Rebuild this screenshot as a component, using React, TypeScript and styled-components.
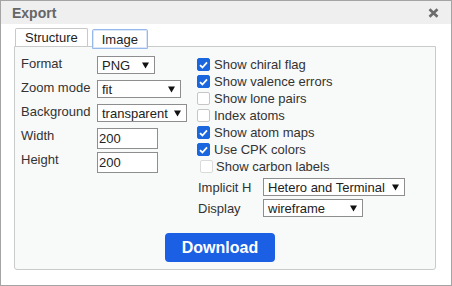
import React from 'react';
import styled, { createGlobalStyle } from 'styled-components';

const Global = createGlobalStyle`
  html, body { margin: 0; padding: 0; background: #fff; }
  body { font-family: "Liberation Sans", Arial, sans-serif; color: #333; }
  * { box-sizing: border-box; }
`;

const Dialog = styled.div`
  width: 452px;
  height: 286px;
  border: 1px solid #a4a4a4;
  background: #fff;
  display: flex;
  flex-direction: column;
`;

const Header = styled.div`
  height: 23px;
  background: #efefef;
  display: flex;
  align-items: center;
  justify-content: space-between;
  padding: 0 12px 0 11px;
`;

const Title = styled.div`
  font-weight: bold;
  font-size: 14px;
  color: #666;
`;

const Close = styled.button`
  border: 0;
  background: none;
  padding: 0;
  width: 11px;
  height: 10px;
  display: flex;
  color: #6c6c6c;
`;

const Body = styled.div`
  padding: 4px 15px 0 13px;
  display: flex;
  flex-direction: column;
`;

const TabRow = styled.div`
  display: flex;
  gap: 4px;
  height: 18px;
  padding-left: 1px;
  align-items: flex-start;
`;

const Tab = styled.div<{ $active?: boolean }>`
  position: relative;
  z-index: 1;
  font-size: 13px;
  color: #222;
  background: #fff;
  display: flex;
  align-items: center;
  justify-content: center;
  border: 1px solid ${(p) => (p.$active ? '#96b9ec' : '#c8c8c8')};
  border-bottom: ${(p) => (p.$active ? '1px solid #96b9ec' : '0')};
  border-radius: 2px 2px 0 0;
  height: ${(p) => (p.$active ? '20px' : '18px')};
  margin-top: ${(p) => (p.$active ? '1px' : '0')};
  padding: 0 9px;
  box-shadow: ${(p) => (p.$active ? 'inset 0 0 0 1px #dbe7f8' : 'none')};
`;

const Panel = styled.div`
  height: 224px;
  border: 1px solid #c9cbcb;
  border-radius: 0 0 3px 3px;
  background: #f8f9f9;
  display: flex;
  flex-direction: column;
`;

const Columns = styled.div`
  display: flex;
  padding: 9px 0 0 6px;
`;

const LeftCol = styled.div`
  width: 176px;
  display: grid;
  grid-template-columns: 76px auto;
  grid-auto-rows: 24px;
  align-items: start;
`;

const Label = styled.div`
  font-size: 13px;
  line-height: 13px;
  color: #333;
  margin-top: 1px;
`;

const SelectBox = styled.div<{ $w: number; $h?: number }>`
  width: ${(p) => p.$w}px;
  height: ${(p) => p.$h ?? 18}px;
  border: 1px solid #8e8e8e;
  background: #fff;
  display: flex;
  align-items: center;
  justify-content: space-between;
  padding: 0 5px 0 4px;
  font-size: 13px;
  color: #222;
  justify-self: start;
`;

const Input = styled.input`
  width: 61px;
  height: 21px;
  border: 1px solid #8e8e8e;
  background: #fff;
  padding: 0 1px;
  font-family: "Liberation Sans", Arial, sans-serif;
  font-size: 13px;
  color: #222;
  justify-self: start;
  outline: none;
`;

const RightCol = styled.div`
  display: flex;
  flex-direction: column;
`;

const CheckRow = styled.label<{ $indent?: boolean }>`
  height: 17px;
  display: flex;
  align-items: center;
  gap: ${(p) => (p.$indent ? '3px' : '4px')};
  padding-left: ${(p) => (p.$indent ? '3px' : '0')};
  font-size: 13px;
  color: #333;
`;

const Box = styled.span<{ $checked: boolean; $disabled?: boolean }>`
  width: 13px;
  height: 13px;
  border-radius: 2px;
  display: flex;
  align-items: center;
  justify-content: center;
  background: ${(p) => (p.$checked ? '#1a66de' : '#fff')};
  border: 1px solid ${(p) => (p.$checked ? '#1a66de' : p.$disabled ? '#dadada' : '#c6c6c6')};
`;

const OptRow = styled.div`
  display: flex;
  align-items: center;
  margin-top: 3px;
`;

const OptLabel = styled.div`
  width: 66px;
  padding-left: 1px;
  font-size: 13px;
  color: #333;
`;

const ButtonRow = styled.div`
  display: flex;
  justify-content: center;
  padding-right: 10px;
  margin-top: 16px;
`;

const Download = styled.button`
  width: 110px;
  height: 29px;
  border: 0;
  border-radius: 4px;
  background: #1a5fe4;
  color: #fff;
  font-family: "Liberation Sans", Arial, sans-serif;
  font-weight: bold;
  font-size: 16px;
  padding: 0;
`;

const Arrow = () => (
  <svg width="7" height="7" viewBox="0 0 7 7">
    <polygon points="0,0.5 7,0.5 3.5,6.5" fill="#111" />
  </svg>
);

const Select = ({ w, h, value }: { w: number; h?: number; value: string }) => (
  <SelectBox $w={w} $h={h}>
    <span>{value}</span>
    <Arrow />
  </SelectBox>
);

const Checkbox = ({ checked, disabled }: { checked: boolean; disabled?: boolean }) => (
  <Box $checked={checked} $disabled={disabled} role="checkbox" aria-checked={checked}>
    {checked && (
      <svg width="9" height="8" viewBox="0 0 9 8">
        <path d="M1 4.2 L3.4 6.5 L8 1.3" fill="none" stroke="#fff" strokeWidth="1.8" />
      </svg>
    )}
  </Box>
);

const checks: { label: string; checked: boolean; disabled?: boolean }[] = [
  { label: 'Show chiral flag', checked: true },
  { label: 'Show valence errors', checked: true },
  { label: 'Show lone pairs', checked: false },
  { label: 'Index atoms', checked: false },
  { label: 'Show atom maps', checked: true },
  { label: 'Use CPK colors', checked: true },
  { label: 'Show carbon labels', checked: false, disabled: true },
];

export default function App() {
  return (
    <>
      <Global />
      <Dialog>
        <Header>
          <Title>Export</Title>
          <Close aria-label="close">
            <svg width="11" height="10" viewBox="0 0 11 10">
              <path d="M1.5 1.2 L9.5 8.8 M9.5 1.2 L1.5 8.8" stroke="currentColor" strokeWidth="2.6" />
            </svg>
          </Close>
        </Header>
        <Body>
          <TabRow>
            <Tab>Structure</Tab>
            <Tab $active>Image</Tab>
          </TabRow>
          <Panel>
            <Columns>
              <LeftCol>
                <Label>Format</Label>
                <Select w={58} value="PNG" />
                <Label>Zoom mode</Label>
                <Select w={84} value="fit" />
                <Label>Background</Label>
                <Select w={90} value="transparent" />
                <Label>Width</Label>
                <Input defaultValue="200" />
                <Label>Height</Label>
                <Input defaultValue="200" />
              </LeftCol>
              <RightCol>
                {checks.map((c) => (
                  <CheckRow key={c.label} $indent={c.disabled}>
                    <Checkbox checked={c.checked} disabled={c.disabled} />
                    {c.label}
                  </CheckRow>
                ))}
                <OptRow>
                  <OptLabel>Implicit H</OptLabel>
                  <Select w={142} value="Hetero and Terminal" />
                </OptRow>
                <OptRow>
                  <OptLabel>Display</OptLabel>
                  <Select w={100} value="wireframe" />
                </OptRow>
              </RightCol>
            </Columns>
            <ButtonRow>
              <Download>Download</Download>
            </ButtonRow>
          </Panel>
        </Body>
      </Dialog>
    </>
  );
}
